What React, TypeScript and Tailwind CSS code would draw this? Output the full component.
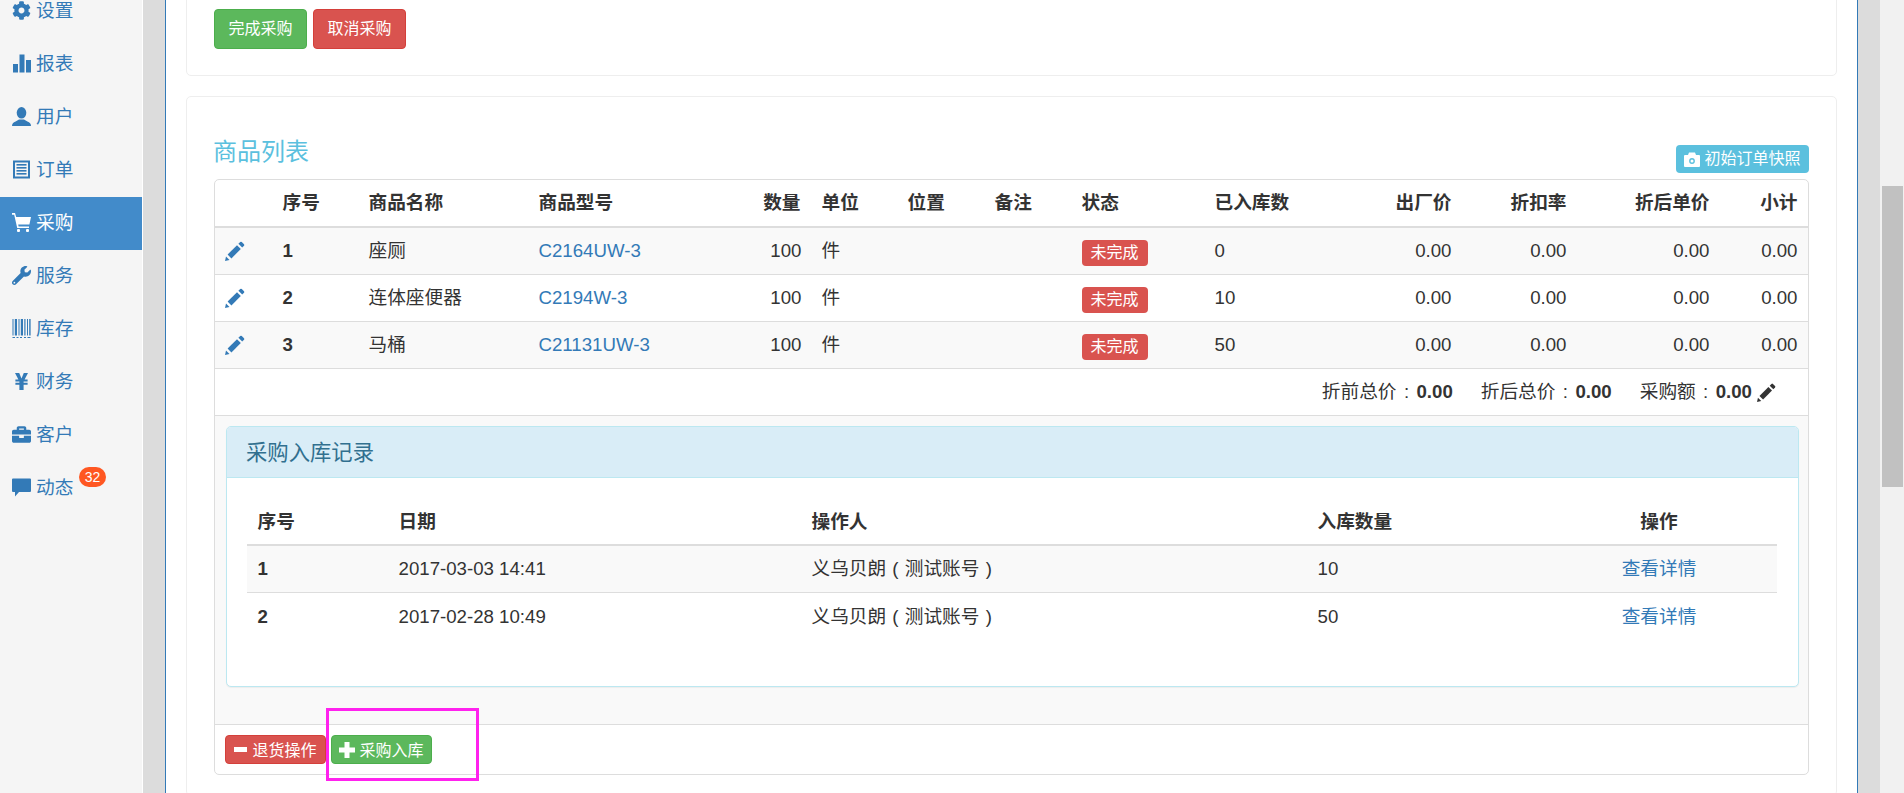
import { FaCog, FaWrench, FaBriefcase } from "react-icons/fa";

const FONT = "font-['Liberation_Sans','Noto_Sans_CJK_SC',sans-serif]";
const COLON = "inline-block w-[20px] text-center";
const PAREN = "inline-block w-[18.67px] text-center";

function Pencil({ className }: { className?: string }) {
  return (
    <svg viewBox="0 0 20 20" className={className} fill="currentColor">
      <path d="M0 20 L1 15.5 L4.5 19 Z" />
      <path d="M2.6 13.6 L12 4.2 L15.8 8 L6.4 17.4 Z" />
      <path d="M13.4 2.8 L15.2 1 Q16 0.3 16.8 1 L19 3.2 Q19.7 4 19 4.8 L17.2 6.6 Z" />
    </svg>
  );
}

function Bars() {
  return (
    <svg viewBox="0 0 19 19" className="h-[19px] w-[19px]" fill="currentColor">
      <rect x="1" y="10" width="5" height="8.5" />
      <rect x="7.5" y="0.5" width="5" height="18" />
      <rect x="14" y="6" width="5" height="12.5" />
    </svg>
  );
}

function UserGlyph() {
  return (
    <svg viewBox="0 0 19 19" className="h-[19px] w-[19px]" fill="currentColor">
      <ellipse cx="9.5" cy="5.8" rx="4.8" ry="5.8" />
      <path d="M0 19 Q0 15.4 3.6 14.4 L7 12.6 H12 L15.4 14.4 Q19 15.4 19 19 Z" />
    </svg>
  );
}

function ListAlt() {
  return (
    <svg viewBox="0 0 19 19" className="h-[19px] w-[19px]" fill="currentColor">
      <path fillRule="evenodd" d="M1 0.5 H18 V18.5 H1 Z M3 2.5 V16.5 H16 V2.5 Z" />
      <rect x="4.5" y="4" width="10" height="1.6" />
      <rect x="4.5" y="7" width="10" height="1.6" />
      <rect x="4.5" y="10" width="10" height="1.6" />
      <rect x="4.5" y="13" width="10" height="1.6" />
    </svg>
  );
}

function Cart() {
  return (
    <svg viewBox="0 0 19 19" className="h-[19px] w-[19px]" fill="currentColor">
      <path d="M0 0 H3 L4.2 4 H19 L17.4 11.5 H6.2 L6.6 13.5 H17 V15 H5.2 L2.2 1.8 H0 Z" />
      <rect x="5" y="16" width="3" height="3" rx="1" />
      <rect x="14" y="16" width="3" height="3" rx="1" />
    </svg>
  );
}

function Barcode() {
  return (
    <svg viewBox="0 0 19 19" className="h-[19px] w-[19px]" fill="currentColor">
      <rect x="0.5" y="0" width="1" height="16.5" />
      <rect x="2.8" y="0" width="2.2" height="16.5" />
      <rect x="6.5" y="0" width="1" height="16.5" />
      <rect x="8.8" y="0" width="2.2" height="16.5" />
      <rect x="12.3" y="0" width="1.2" height="16.5" />
      <rect x="15" y="0" width="1" height="16.5" />
      <rect x="17.2" y="0" width="1.4" height="16.5" />
      <path d="M0.5 18 H3 V19 H0.5 Z M4.5 18 H6.5 V19 H4.5 Z M8 18 H10 V19 H8 Z M12 18 H14 V19 H12 Z M15.5 18 H18.5 V19 H15.5 Z" />
    </svg>
  );
}

function Yen() {
  return (
    <svg viewBox="0 0 19 19" className="h-[19px] w-[19px]" fill="currentColor">
      <path d="M3 1 H7.2 L9.5 6.4 L11.8 1 H16 L12.6 7.4 H15.6 V9.4 H11.6 V10.8 H15.6 V12.8 H11.6 V18 H7.4 V12.8 H3.4 V10.8 H7.4 V9.4 H3.4 V7.4 H6.4 Z" />
    </svg>
  );
}

function Comment() {
  return (
    <svg viewBox="0 0 19 19" className="h-[19px] w-[19px]" fill="currentColor">
      <path d="M1 0.5 H18 Q19 0.5 19 1.5 V13 Q19 14 18 14 H7 L3 18.5 V14 H1 Q0 14 0 13 V1.5 Q0 0.5 1 0.5 Z" />
    </svg>
  );
}

function Camera() {
  return (
    <svg viewBox="0 0 16 15" className="h-[15px] w-[16px]">
      <path fill="currentColor" d="M1 3 H4 L5 0.5 H11 L12 3 H15 Q16 3 16 4 V14 Q16 15 15 15 H1 Q0 15 0 14 V4 Q0 3 1 3 Z" />
      <circle cx="8" cy="9" r="2.2" fill="none" stroke="#5bc0de" strokeWidth="1.4" />
    </svg>
  );
}

function PlusGlyph() {
  return (
    <svg viewBox="0 0 16 16" className="h-[16px] w-[16px]" fill="currentColor">
      <path d="M5.5 0 H10.5 V5.5 H16 V10.5 H10.5 V16 H5.5 V10.5 H0 V5.5 H5.5 Z" />
    </svg>
  );
}

function MinusGlyph() {
  return (
    <svg viewBox="0 0 13 5" className="h-[5px] w-[13px]" fill="currentColor">
      <rect x="0" y="0" width="13" height="5" />
    </svg>
  );
}

const nav: { label: string; icon: React.ReactNode; active?: boolean; badge?: string }[] = [
  { label: "设置", icon: <FaCog className="h-[19px] w-[19px]" /> },
  { label: "报表", icon: <Bars /> },
  { label: "用户", icon: <UserGlyph /> },
  { label: "订单", icon: <ListAlt /> },
  { label: "采购", icon: <Cart />, active: true },
  { label: "服务", icon: <FaWrench className="h-[19px] w-[19px]" /> },
  { label: "库存", icon: <Barcode /> },
  { label: "财务", icon: <Yen /> },
  { label: "客户", icon: <FaBriefcase className="h-[19px] w-[19px]" /> },
  { label: "动态", icon: <Comment />, badge: "32" },
];

const cols = [
  "w-[57px]", "w-[86px]", "w-[170px]", "w-[222px]", "w-[61px]", "w-[86px]", "w-[87px]", "w-[87px]",
  "w-[133px]", "w-[115px]", "w-[143px]", "w-[115px]", "w-[143px]", "w-[88px]",
];

const rows = [
  { n: "1", name: "座厕", model: "C2164UW-3", inb: "0", striped: true },
  { n: "2", name: "连体座便器", model: "C2194W-3", inb: "10", striped: false },
  { n: "3", name: "马桶", model: "C21131UW-3", inb: "50", striped: true },
];

const records = [
  { n: "1", date: "2017-03-03 14:41", qty: "10", striped: true },
  { n: "2", date: "2017-02-28 10:49", qty: "50", striped: false },
];

const heads: [string, string][] = [
  ["", "text-left"], ["序号", "text-left"], ["商品名称", "text-left"], ["商品型号", "text-left"],
  ["数量", "text-right"], ["单位", "text-left"], ["位置", "text-left"], ["备注", "text-left"],
  ["状态", "text-left"], ["已入库数", "text-left"], ["出厂价", "text-right"], ["折扣率", "text-right"],
  ["折后单价", "text-right"], ["小计", "text-right"],
];

const cell = "px-[10.5px] align-middle";
const innerTh = `${cell} h-[48px] border-b-2 border-b-[#dddddd] pt-[2px] font-bold`;

export default function App() {
  return (
    <div className={`${FONT} relative flex h-[793px] w-[1904px] overflow-hidden bg-[#dcdcdc] text-[18.67px] leading-[26px] text-[#333]`}>
      <aside className="-mt-[15px] h-[808px] w-[143px] shrink-0 border-r border-r-white bg-[#f5f5f5]">
        {nav.map((n) => (
          <a
            key={n.label}
            className={`relative flex h-[53px] items-center gap-[5px] pb-[2px] pl-[12px] ${n.active ? "bg-[#428bca] text-white" : "text-[#337ab7]"}`}
          >
            {n.icon}
            <span>{n.label}</span>
            {n.badge && (
              <span className="absolute left-[79px] top-[5px] flex h-[20px] w-[27px] items-center justify-center rounded-full bg-[#ff5722] text-[14px] leading-none text-white">
                {n.badge}
              </span>
            )}
          </a>
        ))}
      </aside>

      <div className="w-[22px] shrink-0" />

      <main className="h-[793px] w-[1693px] shrink-0 overflow-hidden border-x border-x-[#337ab7] bg-white px-[20px]">
        <section className="-mt-[20px] rounded-b-[5px] border border-[#eeeeee] px-[27px] pb-[26px] pt-[28px]">
          <div className="flex gap-[6px] text-[16px] text-white">
            <button className="flex h-[40px] w-[93px] items-center justify-center rounded-[4px] border border-[#4cae4c] bg-[#5cb85c]">完成采购</button>
            <button className="flex h-[40px] w-[93px] items-center justify-center rounded-[4px] border border-[#d43f3a] bg-[#d9534f]">取消采购</button>
          </div>
        </section>

        <section className="mt-[20px] rounded-[5px] border border-[#eeeeee] px-[27px] pb-[20px]">
          <div className="flex h-[82px] items-start justify-between">
            <h3 className="-ml-[1px] mt-[38px] text-[24px] leading-[34px] text-[#5bc0de]">商品列表</h3>
            <button className="mt-[48px] flex h-[28px] w-[133px] items-center justify-center gap-[4px] rounded-[4px] bg-[#5bc0de] text-[16px] text-white">
              <Camera />
              <span>初始订单快照</span>
            </button>
          </div>

          <div className="overflow-hidden rounded-[5px] border border-[#dddddd]">
            <table className="w-[1593px] table-fixed border-separate border-spacing-0">
              <colgroup>
                {cols.map((c, i) => (
                  <col key={i} className={c} />
                ))}
              </colgroup>
              <thead>
                <tr>
                  {heads.map(([h, a], i) => (
                    <th key={i} className={`${cell} ${a} h-[48px] border-b-2 border-b-[#dddddd] font-bold`}>{h}</th>
                  ))}
                </tr>
              </thead>
              <tbody>
                {rows.map((r) => {
                  const bg = r.striped ? "bg-[#f9f9f9]" : "bg-white";
                  const td = `${cell} ${bg} h-[47px] border-b border-b-[#dddddd]`;
                  return (
                    <tr key={r.n}>
                      <td className={td}><Pencil className="-ml-[1px] h-[20px] w-[20px] text-[#337ab7]" /></td>
                      <td className={`${td} font-bold`}>{r.n}</td>
                      <td className={td}>{r.name}</td>
                      <td className={`${td} text-[#337ab7]`}>{r.model}</td>
                      <td className={`${cell} ${bg} h-[47px] border-b border-b-[#dddddd] !pr-[9.5px] text-right`}>100</td>
                      <td className={td}>件</td>
                      <td className={td}></td>
                      <td className={td}></td>
                      <td className={td}>
                        <span className="mt-[3px] flex h-[26px] w-[66px] items-center justify-center rounded-[4px] bg-[#d9534f] text-[16px] text-white">未完成</span>
                      </td>
                      <td className={td}>{r.inb}</td>
                      <td className={`${td} text-right`}>0.00</td>
                      <td className={`${td} text-right`}>0.00</td>
                      <td className={`${td} text-right`}>0.00</td>
                      <td className={`${td} text-right`}>0.00</td>
                    </tr>
                  );
                })}
              </tbody>
            </table>

            <div className="flex h-[47px] items-center justify-end border-b border-b-[#dddddd] pr-[32px]">
              <span>折前总价<span className={COLON}>:</span><b>0.00</b></span>
              <span className="ml-[28px]">折后总价<span className={COLON}>:</span><b>0.00</b></span>
              <span className="ml-[28px]">采购额<span className={COLON}>:</span><b>0.00</b></span>
              <Pencil className="ml-[5px] h-[19px] w-[19px] text-[#333]" />
            </div>

            <div className="border-b border-b-[#dddddd] bg-[#f9f9f9] pb-[37px] pl-[10.5px] pr-[9.5px] pt-[10px]">
              <div className="overflow-hidden rounded-[5px] border border-[#bce8f1] bg-white shadow-[0_1px_1px_rgba(0,0,0,0.05)]">
                <div className="flex h-[51px] items-center border-b border-b-[#bce8f1] bg-[#d9edf7] px-[19.5px] pt-[2px] text-[21.33px] text-[#31708f]">采购入库记录</div>
                <div className="pb-[46px] pl-[20.5px] pr-[21px] pt-[20px]">
                  <table className="w-[1530px] table-fixed border-separate border-spacing-0">
                    <colgroup>
                      <col className="w-[141px]" />
                      <col className="w-[413px]" />
                      <col className="w-[506px]" />
                      <col className="w-[234px]" />
                      <col className="w-[236px]" />
                    </colgroup>
                    <thead>
                      <tr>
                        <th className={`${innerTh} text-left`}>序号</th>
                        <th className={`${innerTh} text-left`}>日期</th>
                        <th className={`${innerTh} text-left`}>操作人</th>
                        <th className={`${innerTh} text-left`}>入库数量</th>
                        <th className={`${innerTh} text-center`}>操作</th>
                      </tr>
                    </thead>
                    <tbody>
                      {records.map((r) => {
                        const td = `${cell} h-[47px] ${r.striped ? "border-b border-b-[#dddddd] bg-[#f9f9f9]" : "bg-white"}`;
                        return (
                          <tr key={r.n}>
                            <td className={`${td} font-bold`}>{r.n}</td>
                            <td className={td}>{r.date}</td>
                            <td className={td}>义乌贝朗<span className={PAREN}>(</span>测试账号<span className={PAREN}>)</span></td>
                            <td className={td}>{r.qty}</td>
                            <td className={`${td} text-center text-[#337ab7]`}>查看详情</td>
                          </tr>
                        );
                      })}
                    </tbody>
                  </table>
                </div>
              </div>
            </div>

            <div className="flex h-[49px] items-center gap-[5px] pl-[10px] text-[16px] text-white">
              <button className="flex h-[29px] w-[101px] items-center justify-center gap-[5px] rounded-[4px] border border-[#d43f3a] bg-[#d9534f]">
                <MinusGlyph />
                <span className="pt-[2px]">退货操作</span>
              </button>
              <button className="flex h-[29px] w-[101px] items-center justify-center gap-[4px] rounded-[4px] border border-[#4cae4c] bg-[#5cb85c]">
                <PlusGlyph />
                <span className="pt-[2px]">采购入库</span>
              </button>
            </div>
          </div>
        </section>
      </main>

      <div className="w-[22px] shrink-0" />

      <div className="w-[24px] shrink-0 bg-[#f1f1f1] pl-[2px] pt-[186px]">
        <div className="h-[301px] w-[21px] bg-[#c1c1c1]" />
      </div>

      <div className="pointer-events-none absolute left-[326px] top-[708px] h-[73px] w-[153px] border-[3px] border-[#ff22ee]" />
    </div>
  );
}
